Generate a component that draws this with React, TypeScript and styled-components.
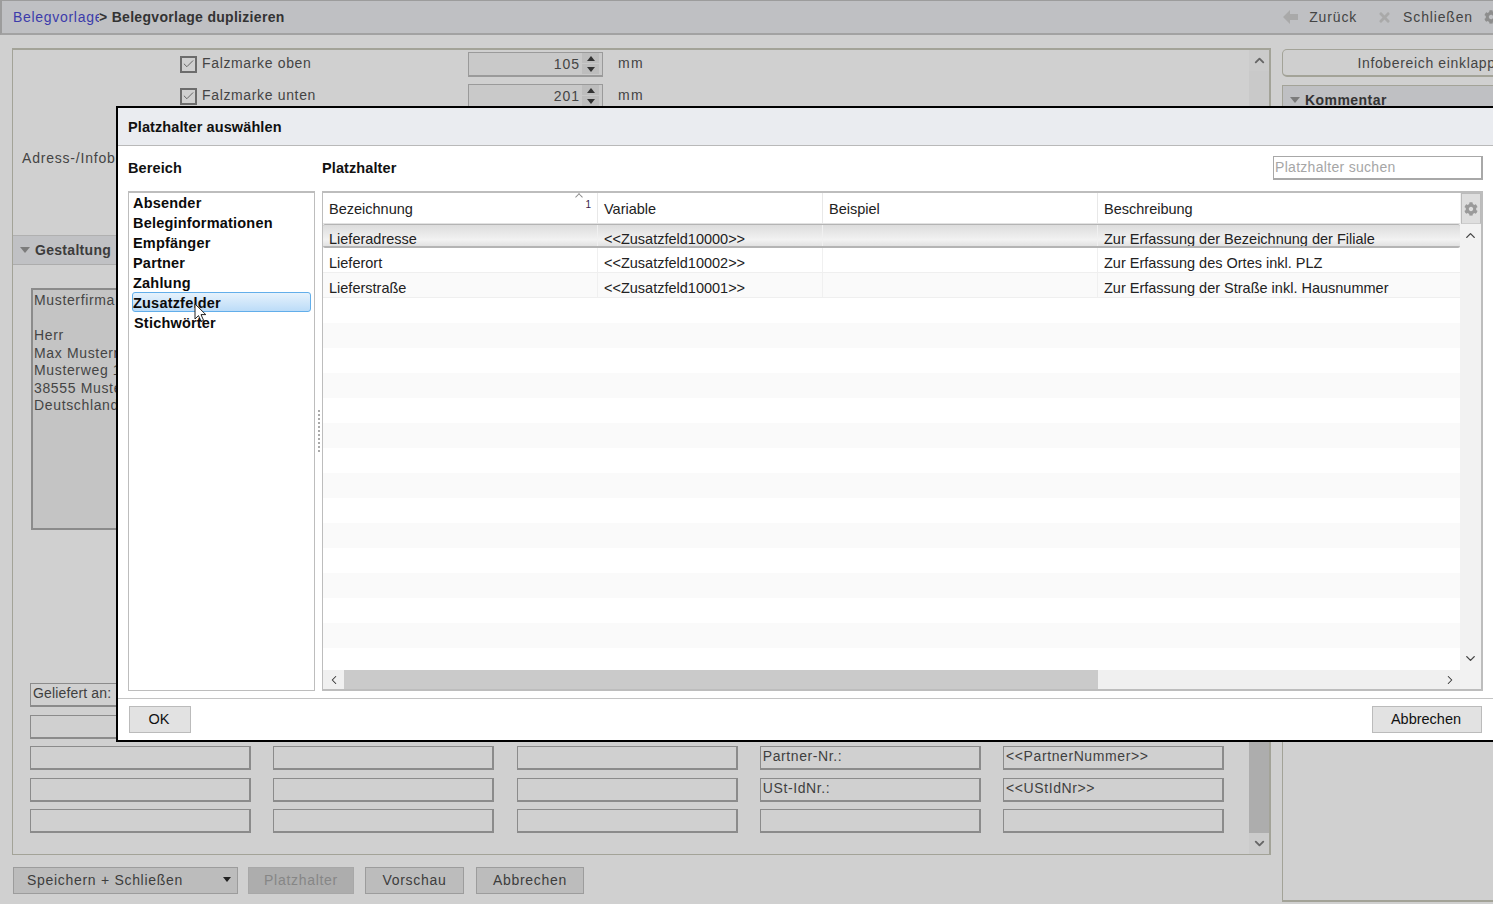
import React from 'react';
import styled, { createGlobalStyle } from 'styled-components';
import { Check, ChevronDown, ChevronLeft, ChevronRight, ChevronUp } from 'lucide-react';
import { FaCog, FaTimes } from 'react-icons/fa';

const GlobalStyle = createGlobalStyle`
  html, body {
    margin: 0;
    padding: 0;
    overflow: hidden;
    background: #d0d0d0;
  }
  * { box-sizing: border-box; }
`;

const areas = ['Absender', 'Beleginformationen', 'Empfänger', 'Partner', 'Zahlung', 'Zusatzfelder', 'Stichwörter'];

const placeholders = [
  ['Lieferadresse', '<<Zusatzfeld10000>>', '', 'Zur Erfassung der Bezeichnung der Filiale'],
  ['Lieferort', '<<Zusatzfeld10002>>', '', 'Zur Erfassung des Ortes inkl. PLZ'],
  ['Lieferstraße', '<<Zusatzfeld10001>>', '', 'Zur Erfassung der Straße inkl. Hausnummer'],
  ...Array.from({ length: 15 }, () => ['', '', '', '']),
];

const formFields = [
  ['Geliefert an:', '', '', '', ''],
  ['', '', '', '', ''],
  ['', '', '', 'Partner-Nr.:', '<<PartnerNummer>>'],
  ['', '', '', 'USt-IdNr.:', '<<UStIdNr>>'],
  ['', '', '', '', ''],
];

const App = () => {
  return (
    <Page>
      <GlobalStyle />
      <Header>
        <Breadcrumb>
          <CrumbLink>Belegvorlagen</CrumbLink>
          <CrumbCurrent>&gt; Belegvorlage duplizieren</CrumbCurrent>
        </Breadcrumb>
        <HeaderActions>
          <HeaderAction>
            <svg width="15" height="14" viewBox="0 0 15 14">
              <path d="M0 7 L7 0 V4 H15 V10 H7 V14 Z" fill="#a9a9a9" />
            </svg>
            Zurück
          </HeaderAction>
          <HeaderAction>
            <FaTimes size={15} color="#a9a9a9" />
            Schließen
            <FaCog size={14} color="#8d8d8d" />
          </HeaderAction>
        </HeaderActions>
      </Header>

      <Main>
        <LeftColumn>
          <Panel>
            <PanelContent>
              <OptionRow>
                <CheckBox><Check size={14} strokeWidth={1.6} color="#555" /></CheckBox>
                <OptionLabel>Falzmarke oben</OptionLabel>
                <Spinner>
                  105
                  <SpinButtons>
                    <SpinButton $up />
                    <SpinButton />
                  </SpinButtons>
                </Spinner>
                <Unit>mm</Unit>
              </OptionRow>
              <OptionRow>
                <CheckBox><Check size={14} strokeWidth={1.6} color="#555" /></CheckBox>
                <OptionLabel>Falzmarke unten</OptionLabel>
                <Spinner>
                  201
                  <SpinButtons>
                    <SpinButton $up />
                    <SpinButton />
                  </SpinButtons>
                </Spinner>
                <Unit>mm</Unit>
              </OptionRow>
              <AddressLabel>Adress-/Infobereich</AddressLabel>
              <SectionHeader>
                <Triangle />
                Gestaltung
              </SectionHeader>
              <LetterBox>
                <div>Musterfirma</div>
                <br />
                <div>Herr</div>
                <div>Max Mustermann</div>
                <div>Musterweg 1</div>
                <div>38555 Musterstadt</div>
                <div>Deutschland</div>
              </LetterBox>
              <FieldGrid>
                {formFields.flat().map((text, i) => (
                  <Field key={i} $tight={i === 0}>{text}</Field>
                ))}
              </FieldGrid>
            </PanelContent>
            <PanelScrollbar>
              <PanelScrollButton><ChevronUp size={15} strokeWidth={3} color="#666" /></PanelScrollButton>
              <PanelScrollThumb />
              <PanelScrollButton><ChevronDown size={15} strokeWidth={3} color="#666" /></PanelScrollButton>
            </PanelScrollbar>
          </Panel>
          <FormFooter>
            <SplitButton>
              Speichern + Schließen
              <Triangle $dark />
            </SplitButton>
            <FooterButton $width={106} disabled>Platzhalter</FooterButton>
            <FooterButton $width={99}>Vorschau</FooterButton>
            <FooterButton $width={108}>Abbrechen</FooterButton>
          </FormFooter>
        </LeftColumn>

        <RightColumn>
          <CollapseButton>Infobereich einklappen</CollapseButton>
          <CommentPanel>
            <CommentHeader>
              <Triangle />
              Kommentar
            </CommentHeader>
          </CommentPanel>
        </RightColumn>
      </Main>

      <Dialog>
        <DialogTitle>Platzhalter auswählen</DialogTitle>
        <DialogBody>
          <LabelRow>
            <AreaLabel>Bereich</AreaLabel>
            <PlaceholderLabel>Platzhalter</PlaceholderLabel>
            <SearchInput placeholder="Platzhalter suchen" readOnly />
          </LabelRow>
          <Columns>
            <AreaList>
              {areas.map((area) => (
                <AreaItem key={area} $active={area === 'Zusatzfelder'}>
                  {area}
                  {area === 'Zusatzfelder' && <CursorIcon />}
                </AreaItem>
              ))}
            </AreaList>
            <Splitter><Grip /></Splitter>
            <TableFrame>
              <TableMain>
                <TableHeader>
                  <HeaderCell>
                    Bezeichnung
                    <SortCaret />
                    <SortIndex>1</SortIndex>
                  </HeaderCell>
                  <HeaderCell>Variable</HeaderCell>
                  <HeaderCell>Beispiel</HeaderCell>
                  <HeaderCell>Beschreibung</HeaderCell>
                </TableHeader>
                <TableRows>
                  {placeholders.map((row, i) => (
                    <TableRow key={i} $selected={i === 0} $striped={i % 2 === 0} $filled={row[0] !== ''}>
                      {row.map((cell, j) => (
                        <TableCell key={j}>{cell}</TableCell>
                      ))}
                    </TableRow>
                  ))}
                </TableRows>
                <HScrollbar>
                  <HScrollEnd><ChevronLeft size={14} strokeWidth={1.8} color="#333" /></HScrollEnd>
                  <HScrollThumb />
                  <HScrollEnd $right><ChevronRight size={14} strokeWidth={1.8} color="#333" /></HScrollEnd>
                </HScrollbar>
              </TableMain>
              <VScrollbar>
                <SettingsButton><FaCog size={14} color="#9a9a9a" /></SettingsButton>
                <VScrollArrow><ChevronUp size={15} strokeWidth={2.2} color="#444" /></VScrollArrow>
                <VScrollArrow $bottom><ChevronDown size={15} strokeWidth={2.2} color="#444" /></VScrollArrow>
              </VScrollbar>
            </TableFrame>
          </Columns>
        </DialogBody>
        <DialogFooter>
          <DialogButton $width={62}>OK</DialogButton>
          <DialogButton $width={110}>Abbrechen</DialogButton>
        </DialogFooter>
      </Dialog>
    </Page>
  );
};

const CursorIcon = () => (
  <CursorSvg width="13" height="20" viewBox="0 0 13 20">
    <path d="M1 1 L1 16 L4.5 12.6 L7 18.5 L9.6 17.4 L7 11.6 L11.8 11.6 Z" fill="#fff" stroke="#222" strokeWidth="1" />
  </CursorSvg>
);

const Page = styled.div`
  position: relative;
  width: 1493px;
  height: 904px;
  overflow: hidden;
  background: #d0d0d0;
  color: #444;
  font-family: "Liberation Sans", Arial, sans-serif;
  font-size: 14px;
`;

const Header = styled.div`
  display: flex;
  align-items: center;
  justify-content: space-between;
  height: 35px;
  padding: 0 0 0 13px;
  background: #bfc0c3;
  border-top: 1px solid #9c9c9c;
  border-left: 2px solid #9c9c9c;
  border-bottom: 2px solid #a2a2a2;
`;

const Breadcrumb = styled.div`
  display: flex;
  align-items: center;
  margin-left: -2px;
`;

const CrumbLink = styled.span`
  width: 86px;
  overflow: hidden;
  white-space: nowrap;
  color: #3c3cab;
  letter-spacing: 0.7px;
`;

const CrumbCurrent = styled.span`
  color: #333;
  font-weight: 700;
  letter-spacing: 0.3px;
`;

const HeaderActions = styled.div`
  display: flex;
  align-items: center;
  gap: 20px;
  margin-right: -5px;
  flex: none;
`;

const HeaderAction = styled.div`
  display: flex;
  align-items: center;
  gap: 11px;
  color: #444;
  letter-spacing: 0.85px;
`;

const Main = styled.div`
  display: flex;
  gap: 11px;
  padding: 13px 0 0 12px;
  width: 1800px;
`;

const LeftColumn = styled.div`
  width: 1259px;
  flex: none;
  display: flex;
  flex-direction: column;
`;

const Panel = styled.div`
  display: flex;
  height: 807px;
  border: 1px solid #a3a398;
  border-right-width: 2px;
  border-top-width: 2px;
`;

const PanelContent = styled.div`
  flex: 1;
  min-width: 0;
  display: flex;
  flex-direction: column;
`;

const OptionRow = styled.div`
  display: flex;
  align-items: center;
  height: 25px;
  margin-top: 7px;
  padding-left: 167px;
  &:first-child { margin-top: 2px; }
`;

const CheckBox = styled.div`
  width: 17px;
  height: 17px;
  border: 2px solid #6c6c6c;
  display: flex;
  align-items: center;
  justify-content: center;
  flex: none;
  margin-top: -1px;
`;

const OptionLabel = styled.div`
  width: 266px;
  margin-left: 5px;
  letter-spacing: 0.65px;
  margin-top: -3px;
`;

const Spinner = styled.div`
  width: 135px;
  height: 25px;
  display: flex;
  align-items: center;
  justify-content: flex-end;
  gap: 2px;
  padding: 0 3px 1px 0;
  border: 1px solid #9a9a9a;
  border-bottom-width: 2px;
  letter-spacing: 1px;
  background: #c9c9c9;
`;

const SpinButtons = styled.div`
  display: flex;
  flex-direction: column;
  gap: 1px;
  width: 17px;
`;

const SpinButton = styled.div<{ $up?: boolean }>`
  height: 10px;
  background: #bdbdbd;
  display: flex;
  align-items: center;
  justify-content: center;
  &::after {
    content: '';
    border-left: 4px solid transparent;
    border-right: 4px solid transparent;
    ${(p) => (p.$up ? 'border-bottom: 5px solid #333;' : 'border-top: 5px solid #333;')}
  }
`;

const Unit = styled.div`
  margin: -3px 0 0 15px;
  letter-spacing: 1.4px;
`;

const AddressLabel = styled.div`
  margin: 39px 0 0 9px;
  height: 20px;
  line-height: 20px;
  letter-spacing: 0.8px;
  white-space: nowrap;
`;

const SectionHeader = styled.div`
  display: flex;
  align-items: center;
  gap: 5px;
  height: 30px;
  margin-top: 67px;
  padding-left: 7px;
  background: #c0c1c4;
  border-top: 1px solid #b0b0b0;
  border-bottom: 1px solid #acacac;
  color: #3c3c3c;
  font-weight: 700;
  letter-spacing: 0.3px;
`;

const Triangle = styled.span<{ $dark?: boolean }>`
  width: 0;
  height: 0;
  flex: none;
  border-left: ${(p) => (p.$dark ? 4 : 5)}px solid transparent;
  border-right: ${(p) => (p.$dark ? 4 : 5)}px solid transparent;
  border-top: ${(p) => (p.$dark ? 5 : 6)}px solid ${(p) => (p.$dark ? '#222' : '#7c7c7c')};
`;

const LetterBox = styled.div`
  width: 500px;
  height: 242px;
  margin: 23px 0 0 18px;
  padding: 2px 0 0 1px;
  background: #c4c4c4;
  border: 2px solid #8b8b8b;
  line-height: 17.5px;
  letter-spacing: 0.65px;
  br { display: block; content: ''; }
`;

const FieldGrid = styled.div`
  display: grid;
  grid-template-columns: repeat(5, 221px);
  grid-auto-rows: 24px;
  column-gap: 22.25px;
  row-gap: 7.5px;
  margin: 153px 0 0 17px;
`;

const Field = styled.div<{ $tight?: boolean }>`
  border: 2px solid #8b8b8b;
  border-top-width: 1px;
  border-left-width: 1px;
  padding-left: 2px;
  line-height: 19px;
  letter-spacing: ${(p) => (p.$tight ? '0.15px' : '0.6px')};
  white-space: nowrap;
  overflow: hidden;
  color: #3f3f3f;
`;

const PanelScrollbar = styled.div`
  width: 20px;
  flex: none;
  display: flex;
  flex-direction: column;
  background: #c9c9c9;
`;

const PanelScrollButton = styled.div`
  height: 21px;
  display: flex;
  align-items: center;
  justify-content: center;
  background: #cbcbcb;
`;

const PanelScrollThumb = styled.div`
  flex: 1;
  margin-top: 60px;
  background: #adadad;
`;

const FormFooter = styled.div`
  display: flex;
  gap: 11px;
  margin-top: 12px;
  height: 27px;
`;

const FooterButton = styled.button<{ $width: number }>`
  width: ${(p) => p.$width}px;
  padding: 0 0 2px;
  background: ${(p) => (p.disabled ? '#adadad' : '#bcbcbc')};
  border: 1px solid ${(p) => (p.disabled ? '#a8a8a8' : '#9c9c9c')};
  color: ${(p) => (p.disabled ? '#868686' : '#3d3d3d')};
  font: 14px "Liberation Sans", Arial, sans-serif;
  letter-spacing: 0.7px;
  &:last-child { margin-left: 1px; }
`;

const SplitButton = styled.div`
  width: 225px;
  margin: 0 -1px 0 1px;
  display: flex;
  align-items: center;
  justify-content: space-between;
  padding: 0 6px 2px 13px;
  background: #bcbcbc;
  border: 1px solid #9c9c9c;
  color: #3d3d3d;
  letter-spacing: 0.7px;
`;

const RightColumn = styled.div`
  width: 306px;
  flex: none;
  display: flex;
  flex-direction: column;
  gap: 8px;
`;

const CollapseButton = styled.div`
  height: 28px;
  margin-top: 1px;
  display: flex;
  align-items: center;
  justify-content: center;
  border: 1px solid #a3a398;
  border-bottom-width: 2px;
  border-radius: 5px;
  background: #cfcfcf;
  color: #444;
  letter-spacing: 0.65px;
`;

const CommentPanel = styled.div`
  height: 817px;
  border: 1px solid #a3a398;
  border-bottom-width: 2px;
`;

const CommentHeader = styled.div`
  display: flex;
  align-items: center;
  gap: 5px;
  height: 30px;
  padding: 0 0 3px 7px;
  background: #bfc0c3;
  color: #333;
  font-weight: 700;
  letter-spacing: 0.45px;
`;

const Dialog = styled.div`
  position: absolute;
  left: 116px;
  top: 106px;
  width: 1381px;
  height: 636px;
  display: flex;
  flex-direction: column;
  background: #fff;
  border: 2px solid #000;
  color: #222;
  font-size: 14.5px;
`;

const DialogTitle = styled.div`
  height: 38px;
  display: flex;
  align-items: center;
  padding-left: 10px;
  background: #eaecf0;
  border-bottom: 1px solid #b9b9b9;
  color: #111;
  font-weight: 700;
  letter-spacing: 0.1px;
`;

const DialogBody = styled.div`
  height: 553px;
  padding: 10px 12px 0 10px;
  border-bottom: 1px solid #c4c4c4;
`;

const LabelRow = styled.div`
  display: flex;
  align-items: center;
  height: 24px;
  margin-bottom: 11px;
  font-weight: 700;
  color: #111;
`;

const AreaLabel = styled.div`
  width: 194px;
  letter-spacing: 0.1px;
`;

const PlaceholderLabel = styled.div`
  flex: 1;
  letter-spacing: 0.1px;
`;

const SearchInput = styled.input`
  width: 210px;
  height: 24px;
  padding: 0 1px 2px;
  border: 2px solid #a8a8a8;
  border-top-width: 1px;
  border-left-width: 1px;
  outline: none;
  font: 14px "Liberation Sans", Arial, sans-serif;
  letter-spacing: 0.3px;
  &::placeholder { color: #a6a6a6; opacity: 1; }
`;

const Columns = styled.div`
  display: flex;
  height: 500px;
`;

const AreaList = styled.div`
  width: 187px;
  flex: none;
  padding: 0 3px;
  border: 1px solid #bdbdbd;
  border-top-width: 2px;
`;

const AreaItem = styled.div<{ $active?: boolean }>`
  position: relative;
  height: 20px;
  line-height: ${(p) => (p.$active ? '20px' : '20px')};
  padding-left: ${(p) => (p.$active ? '0' : '1px')};
  border-radius: 3px;
  font-weight: 700;
  color: #0b0b0b;
  letter-spacing: 0.2px;
  ${(p) => p.$active && 'margin: -1px 0 1px;'}
  border: ${(p) => (p.$active ? '1px solid #62aeea' : 'none')};
  background: ${(p) => (p.$active ? 'linear-gradient(#e6f2fc, #bcdcf8)' : 'transparent')};
  &:last-child { padding-left: 2px; }
`;

const CursorSvg = styled.svg`
  position: absolute;
  left: 61px;
  top: 10px;
`;

const Splitter = styled.div`
  width: 7px;
  flex: none;
  display: flex;
  align-items: center;
  justify-content: center;
`;

const Grip = styled.div`
  height: 42px;
  margin-top: -20px;
  border-left: 2px dotted #aaa;
`;

const TableFrame = styled.div`
  flex: 1;
  min-width: 0;
  display: flex;
  border: 1px solid #bdbdbd;
  border-top-width: 2px;
  border-bottom-width: 2px;
  border-right-width: 2px;
`;

const TableMain = styled.div`
  width: 1137px;
  flex: none;
  display: flex;
  flex-direction: column;
`;

const columnTemplate = '274px 225px 275px 363px';

const TableHeader = styled.div`
  display: grid;
  grid-template-columns: ${columnTemplate};
  height: 31px;
  flex: none;
  border-bottom: 1px solid #e2e2e2;
`;

const HeaderCell = styled.div`
  position: relative;
  padding: 7px 0 0 6px;
  line-height: 18px;
  border-left: 1px solid #e8e8e8;
  &:first-child { border-left: none; }
`;

const SortCaret = styled.span`
  position: absolute;
  top: 1px;
  right: 15px;
  width: 6px;
  height: 6px;
  border-top: 1px solid #888;
  border-left: 1px solid #888;
  transform: rotate(45deg) scale(0.9);
`;

const SortIndex = styled.span`
  position: absolute;
  top: 6px;
  right: 6px;
  font-size: 10px;
  line-height: 12px;
  color: #3a1a4a;
`;

const TableRows = styled.div`
  flex: 1;
  min-height: 0;
  overflow: hidden;
`;

const TableRow = styled.div<{ $selected?: boolean; $striped?: boolean; $filled?: boolean }>`
  display: grid;
  grid-template-columns: ${columnTemplate};
  height: 25px;
  background: ${(p) => (p.$selected ? 'linear-gradient(#dcdcdc, #f2f2f2 70%, #e2e2e2)' : p.$striped ? '#fafafa' : '#fff')};
  ${(p) => p.$filled && !p.$selected && 'border-bottom: 1px solid #efefef;'}
  ${(p) => p.$selected && 'height: 24px; border-top: 1px solid #b4b4b4; border-bottom: 2px solid #b4b4b4; border-radius: 2px; padding-top: 0;'}
  & > div {
    border-left: ${(p) => (p.$filled ? '1px solid #f0f0f0' : 'none')};
    padding-top: ${(p) => (p.$selected ? '5px' : '6px')};
    padding-left: ${(p) => (p.$filled ? '6px' : '7px')};
  }
  & > div:first-child { border-left: none; }
`;

const TableCell = styled.div`
  line-height: 18px;
  overflow: hidden;
  white-space: nowrap;
`;

const HScrollbar = styled.div`
  display: flex;
  height: 19px;
  flex: none;
  background: #f0f0f0;
`;

const HScrollEnd = styled.div<{ $right?: boolean }>`
  width: ${(p) => (p.$right ? '362px' : '21px')};
  flex: none;
  display: flex;
  align-items: center;
  justify-content: ${(p) => (p.$right ? 'flex-end' : 'center')};
  padding-right: ${(p) => (p.$right ? '3px' : '0')};
`;

const HScrollThumb = styled.div`
  width: 754px;
  flex: none;
  background: #cacaca;
`;

const VScrollbar = styled.div`
  flex: 1;
  display: flex;
  flex-direction: column;
  background: #f2f2f2;
`;

const SettingsButton = styled.div`
  height: 31px;
  margin-left: 1px;
  display: flex;
  align-items: center;
  justify-content: center;
  background: #dedede;
  border: 1px solid #bbb;
  border-bottom: 1px solid #ccc;
`;

const VScrollArrow = styled.div<{ $bottom?: boolean }>`
  height: 22px;
  display: flex;
  align-items: center;
  justify-content: center;
  ${(p) => p.$bottom && 'margin-top: auto; margin-bottom: 20px;'}
`;

const DialogFooter = styled.div`
  flex: 1;
  display: flex;
  align-items: flex-start;
  justify-content: space-between;
  padding: 7px 13px 0 11px;
`;

const DialogButton = styled.button<{ $width: number }>`
  width: ${(p) => p.$width}px;
  height: 27px;
  padding: 0 2px 2px 0;
  background: #e2e2e2;
  border: 1px solid #bbb;
  color: #111;
  font: 14.5px "Liberation Sans", Arial, sans-serif;
`;

export default App;
